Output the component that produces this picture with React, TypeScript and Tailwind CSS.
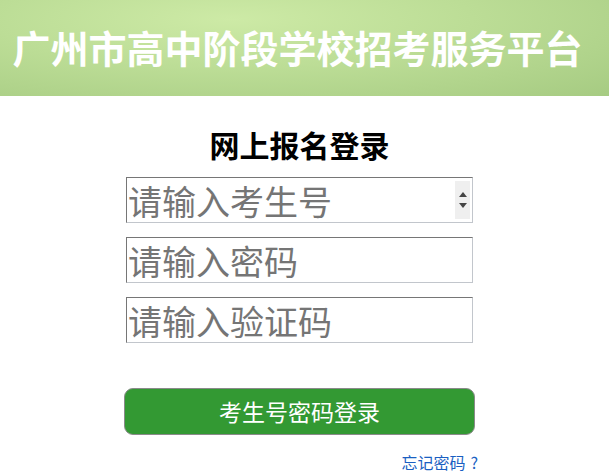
import { useState } from 'react';

const cjk = "font-['Microsoft_YaHei','Noto_Sans_CJK_SC',sans-serif]";

function Spinner() {
    return (
        <div className="flex flex-col justify-center gap-[6px] w-[15px] h-[38px] bg-[#efefef] mr-[2px]">
            <div className="mx-auto w-0 h-0 border-x-[4px] border-x-transparent border-b-[5px] border-b-[#444]" />
            <div className="mx-auto w-0 h-0 border-x-[4px] border-x-transparent border-t-[5px] border-t-[#444]" />
        </div>
    );
}

function Field({ placeholder, value, onChange, type = 'text', spinner = false }: {
    placeholder: string;
    value: string;
    onChange: (v: string) => void;
    type?: string;
    spinner?: boolean;
}) {
    return (
        <div className="flex items-center w-[347px] h-[46px] border border-t-[#767676] border-l-[#767676] border-b-[#c2c6cc] border-r-[#c2c6cc] bg-white">
            <input
                type={type}
                value={value}
                onChange={e => onChange(e.target.value)}
                placeholder={placeholder}
                className={`flex-1 min-w-0 h-full pl-[1px] text-[34px] leading-none text-[#333] placeholder:text-[#757575] outline-none bg-transparent ${cjk}`}
            />
            {spinner && <Spinner />}
        </div>
    );
}

export default function App() {
    const [ksh, setKsh] = useState('');
    const [mm, setMm] = useState('');
    const [yzm, setYzm] = useState('');

    return (
        <div className={`w-[609px] h-[475px] bg-white overflow-hidden ${cjk}`}>
            <div className="h-[96px] flex items-center justify-center bg-[radial-gradient(ellipse_at_38%_20%,#cdeaa6_0%,#bcdd96_45%,#a6cb82_100%)]">
                <h1 className="text-[38px] font-bold text-white leading-none pb-[2px] pr-[14px]">广州市高中阶段学校招考服务平台</h1>
            </div>

            <div className="pl-[126px] pt-[33px]">
                <h2 className="w-[347px] text-center text-[30px] font-bold text-black leading-none">网上报名登录</h2>

                <div className="mt-[18px] flex flex-col gap-[14px]">
                    <Field placeholder="请输入考生号" value={ksh} onChange={setKsh} spinner />
                    <Field placeholder="请输入密码" value={mm} onChange={setMm} type="password" />
                    <Field placeholder="请输入验证码" value={yzm} onChange={setYzm} />
                </div>

                <button className="mt-[45px] -ml-[2px] w-[351px] h-[47px] rounded-[9px] border border-[#8a8a8a] bg-[#339933] text-white text-[23px] leading-none">
                    考生号密码登录
                </button>

                <div className="w-[352px] text-right mt-[15px]">
                    <a href="#" className="text-[16px] text-[#1a5fc2] leading-none">忘记密码<span className="ml-[5px]">?</span></a>
                </div>
            </div>
        </div>
    );
}
